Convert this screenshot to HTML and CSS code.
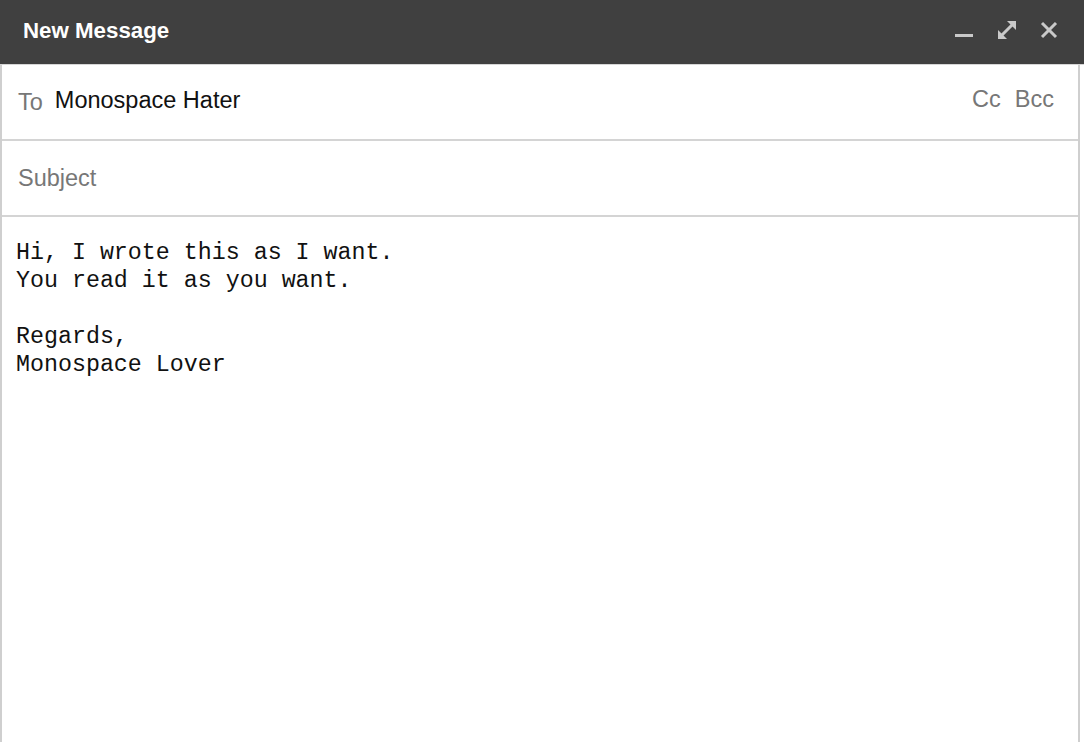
FILE: index.html
```html
<!DOCTYPE html>
<html>
<head>
<meta charset="utf-8">
<link rel="stylesheet" href="styles.css">
</head>
<body>
<div class="compose">
  <div class="titlebar">
    <div class="title">New Message</div>
    <div class="controls">
      <svg class="ic" width="20" height="20" viewBox="0 0 20 20"><rect x="1" y="14" width="18" height="3" fill="#c9c9c9"/></svg>
      <svg class="ic" width="22" height="22" viewBox="0 0 22 22"><g fill="none" stroke="#c9c9c9" stroke-width="3"><line x1="5" y1="17" x2="17" y2="5"/></g><polygon points="11,2 20,2 20,11" fill="#c9c9c9"/><polygon points="2,11 2,20 11,20" fill="#c9c9c9"/></svg>
      <svg class="ic" width="18" height="18" viewBox="0 0 18 18"><g stroke="#c9c9c9" stroke-width="3"><line x1="2" y1="2" x2="16" y2="16"/><line x1="16" y1="2" x2="2" y2="16"/></g></svg>
    </div>
  </div>
  <div class="panel">
    <div class="row">
      <span class="label">To</span>
      <span class="value">Monospace Hater</span>
      <span class="ccbcc"><span>Cc</span><span>Bcc</span></span>
    </div>
    <div class="row">
      <span class="label">Subject</span>
    </div>
    <pre class="body">Hi, I wrote this as I want.
You read it as you want.

Regards,
Monospace Lover</pre>
  </div>
</div>
</body>
</html>
```
FILE: styles.css
```css
html, body {
  margin: 0;
  padding: 0;
  background: #ffffff;
  height: 100%;
  overflow: hidden;
}
.compose {
  font-family: "Liberation Sans", Arial, sans-serif;
  height: 742px;
  display: flex;
  flex-direction: column;
}
.titlebar {
  height: 64px;
  background: #404040;
  display: flex;
  align-items: center;
  justify-content: space-between;
  padding: 0 26px 0 23px;
  border-bottom: 1px solid #d6d6d6;
  flex-shrink: 0;
}
.title {
  color: #ffffff;
  font-size: 22.3px;
  font-weight: 700;
  margin-top: -3px;
}
.controls {
  display: flex;
  align-items: center;
  gap: 22px;
  margin-top: -4px;
}
.ic { display: block; }
.panel {
  flex: 1;
  border-left: 2px solid #cfcfcf;
  border-right: 2px solid #cfcfcf;
  margin-right: 4px;
  display: flex;
  flex-direction: column;
}
.row {
  height: 74px;
  border-bottom: 2px solid #d4d4d4;
  display: flex;
  align-items: center;
  padding: 0 24px 0 16px;
  font-size: 23.5px;
  flex-shrink: 0;
}
.label {
  color: #777777;
}
.value {
  color: #111111;
  margin-left: 12px;
  margin-top: -4px;
}
.ccbcc {
  margin-left: auto;
  color: #777777;
  display: flex;
  gap: 14px;
  margin-top: -6px;
}
.body {
  margin: 0;
  padding: 22px 14px;
  font-family: "Liberation Mono", "Courier New", monospace;
  font-size: 23.3px;
  line-height: 28px;
  color: #111111;
}
```
